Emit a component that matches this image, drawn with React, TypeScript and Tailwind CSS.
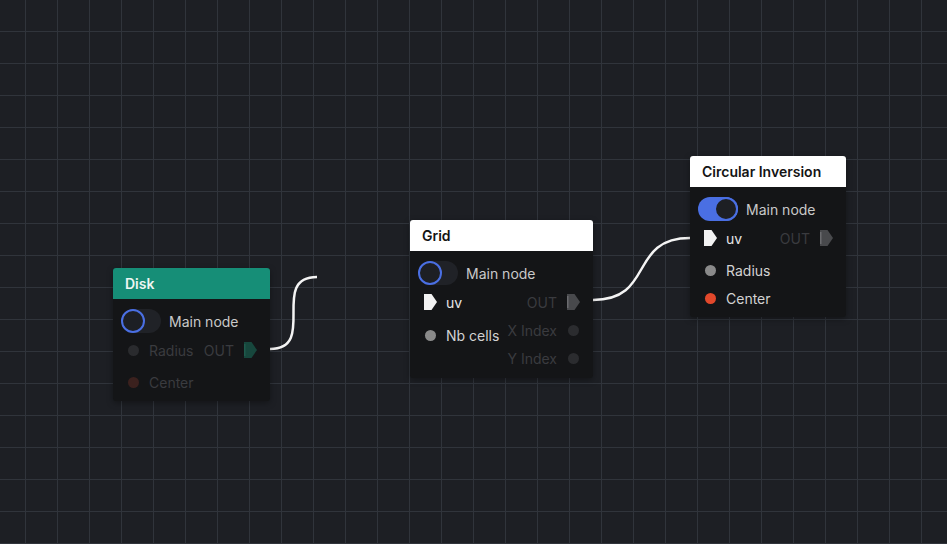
import React from 'react'

const font = { fontFamily: 'Inter, "Liberation Sans", sans-serif' }

function InPort({ color }: { color: string }) {
  return (
    <svg width="13" height="16" viewBox="0 0 13 16">
      <path d="M0 0H7.5L13 8L7.5 16H0Z" fill={color} />
    </svg>
  )
}

function OutPort({ color, edge }: { color: string; edge: string }) {
  return (
    <svg width="13" height="16" viewBox="0 0 13 16">
      <path d="M0 0H7.5L13 8L7.5 16H0Z" fill={color} />
      <rect x="0" y="2" width="1.5" height="12" fill={edge} />
    </svg>
  )
}

function Toggle({ on }: { on?: boolean }) {
  return (
    <div
      className={
        'relative h-6 w-10 rounded-full ' + (on ? 'bg-[#4a6fe3]' : 'bg-[#202227]')
      }
    >
      <div
        className={
          'absolute top-0 h-6 w-6 rounded-full border-[2.5px] border-[#4a6fe3] bg-[#1d1f24] ' +
          (on ? 'right-0' : 'left-0')
        }
      />
    </div>
  )
}

function Node({
  title,
  header,
  on,
  className,
  inputs,
  outputs,
}: {
  title: string
  header: string
  on?: boolean
  className: string
  inputs: React.ReactNode
  outputs: React.ReactNode
}) {
  return (
    <div
      className={`absolute ${className} overflow-hidden rounded-[3px] bg-[#141517] shadow-[0_2px_6px_rgba(0,0,0,0.35)]`}
    >
      <div className={`flex h-[31px] items-center px-3 text-[14px] font-semibold ${header}`}>
        {title}
      </div>
      <div className="pt-[9px]">
        <div className="flex h-[26px] items-center gap-2 pl-2">
          <Toggle on={on} />
          <span className="text-[14px] text-[#c9c9c9]">Main node</span>
        </div>
        <div className="mt-[2px] flex justify-between">
          <div className="flex flex-col pl-3">{inputs}</div>
          <div className="flex flex-col pr-[13px]">{outputs}</div>
        </div>
      </div>
    </div>
  )
}

function InRow({ label, dot, flow, text, className }: { label: string; dot?: string; flow?: boolean; text: string; className?: string }) {
  return (
    <div className={`flex h-7 items-center gap-2 ${className ?? ''}`}>
      <div className="flex w-4 items-center justify-center">
        {flow ? <InPort color="#f2f2f2" /> : <div className="h-[11px] w-[11px] rounded-full" style={{ background: dot }} />}
      </div>
      <span className={`whitespace-nowrap text-[14px] ${text}`}>{label}</span>
    </div>
  )
}

function OutRow({ label, dot, port, edge, text }: { label: string; dot?: string; port?: string; edge?: string; text: string }) {
  return (
    <div className="flex h-7 items-center justify-end gap-[10px]">
      <span className={`whitespace-nowrap text-[14px] ${text}`}>{label}</span>
      <div className="flex w-[13px] items-center justify-center">
        {port ? <OutPort color={port} edge={edge ?? port} /> : <div className="h-[11px] w-[11px] rounded-full" style={{ background: dot }} />}
      </div>
    </div>
  )
}

export default function App() {
  return (
    <div
      style={font}
      className="relative h-[544px] w-[947px] overflow-hidden bg-[#1d1f24] bg-[linear-gradient(to_right,#30343b_1px,transparent_1px),linear-gradient(to_bottom,#30343b_1px,transparent_1px)] bg-size-[32px_32px] bg-position-[25px_31px]"
    >
      {/* wires */}
      <svg className="absolute inset-0" width="947" height="544">
        <path d="M270 349C318 349 269 277 317 277" stroke="#f4f4f4" strokeWidth="2.5" fill="none" />
        <path d="M593 300C655 300 628 238 690 238" stroke="#f4f4f4" strokeWidth="2.5" fill="none" />
      </svg>

      <Node
        title="Disk"
        header="bg-[#168e77] text-[#eef6f3]"
        className="left-[113px] top-[268px] w-[157px] pb-[5px]"
        inputs={
          <>
            <InRow label="Radius" dot="#2a2b2e" text="text-[#3a3b3f]" className="mb-1" />
            <InRow label="Center" dot="#3b211e" text="text-[#3a3b3f]" />
          </>
        }
        outputs={<OutRow label="OUT" port="#17473d" edge="#1f5a4d" text="text-[#3a3b3f]" />}
      />

      <Node
        title="Grid"
        header="bg-white text-[#141414]"
        className="left-[410px] top-[220px] w-[183px] pb-[6px]"
        inputs={
          <>
            <InRow label="uv" flow text="text-[#e6e6e6]" className="mb-[5px]" />
            <InRow label="Nb cells" dot="#8a8a8a" text="text-[#d2d2d2]" />
          </>
        }
        outputs={
          <>
            <OutRow label="OUT" port="#48494c" edge="#6a6b6e" text="text-[#3a3b3f]" />
            <OutRow label="X Index" dot="#2b2c2f" text="text-[#3a3b3f]" />
            <OutRow label="Y Index" dot="#2b2c2f" text="text-[#3a3b3f]" />
          </>
        }
      />

      <Node
        title="Circular Inversion"
        header="bg-white text-[#141414]"
        className="left-[690px] top-[156px] w-[156px] pb-[5px]"
        on
        inputs={
          <>
            <InRow label="uv" flow text="text-[#e6e6e6]" className="mb-[4px]" />
            <InRow label="Radius" dot="#8a8a8a" text="text-[#d2d2d2]" />
            <InRow label="Center" dot="#e2482b" text="text-[#d2d2d2]" />
          </>
        }
        outputs={<OutRow label="OUT" port="#48494c" edge="#6a6b6e" text="text-[#3a3b3f]" />}
      />
    </div>
  )
}
